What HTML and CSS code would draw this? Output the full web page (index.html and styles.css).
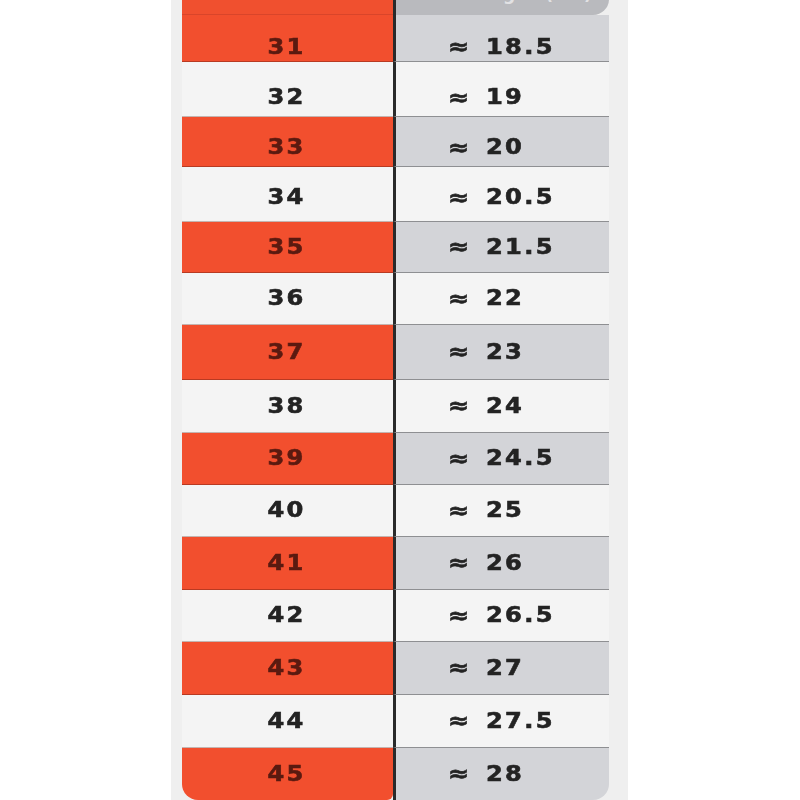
FILE: index.html
```html
<!DOCTYPE html>
<html>
<head>
<meta charset="utf-8">
<link rel="stylesheet" href="styles.css">
</head>
<body>
<div class="page">
  <div class="panel">
    <div class="chart">
      <div class="cell head-eu">Euro Size</div>
      <div class="cell head-cm">Foot Length (cm)</div>

      <div class="cell eu red s1"><span class="n">31</span></div><div class="cell cm grey s1"><span class="val"><span class="ap">≈</span><span class="num">18.5</span></span></div>
      <div class="cell eu white s2"><span class="n">32</span></div><div class="cell cm white s2"><span class="val"><span class="ap">≈</span><span class="num">19</span></span></div>
      <div class="cell eu red s3"><span class="n">33</span></div><div class="cell cm grey s3"><span class="val"><span class="ap">≈</span><span class="num">20</span></span></div>
      <div class="cell eu white s4"><span class="n">34</span></div><div class="cell cm white s4"><span class="val"><span class="ap">≈</span><span class="num">20.5</span></span></div>
      <div class="cell eu red"><span class="n">35</span></div><div class="cell cm grey"><span class="val"><span class="ap">≈</span><span class="num">21.5</span></span></div>
      <div class="cell eu white"><span class="n">36</span></div><div class="cell cm white"><span class="val"><span class="ap">≈</span><span class="num">22</span></span></div>
      <div class="cell eu red"><span class="n">37</span></div><div class="cell cm grey"><span class="val"><span class="ap">≈</span><span class="num">23</span></span></div>
      <div class="cell eu white"><span class="n">38</span></div><div class="cell cm white"><span class="val"><span class="ap">≈</span><span class="num">24</span></span></div>
      <div class="cell eu red"><span class="n">39</span></div><div class="cell cm grey"><span class="val"><span class="ap">≈</span><span class="num">24.5</span></span></div>
      <div class="cell eu white"><span class="n">40</span></div><div class="cell cm white"><span class="val"><span class="ap">≈</span><span class="num">25</span></span></div>
      <div class="cell eu red"><span class="n">41</span></div><div class="cell cm grey"><span class="val"><span class="ap">≈</span><span class="num">26</span></span></div>
      <div class="cell eu white"><span class="n">42</span></div><div class="cell cm white"><span class="val"><span class="ap">≈</span><span class="num">26.5</span></span></div>
      <div class="cell eu red"><span class="n">43</span></div><div class="cell cm grey"><span class="val"><span class="ap">≈</span><span class="num">27</span></span></div>
      <div class="cell eu white"><span class="n">44</span></div><div class="cell cm white"><span class="val"><span class="ap">≈</span><span class="num">27.5</span></span></div>
      <div class="cell eu red last-eu"><span class="n">45</span></div><div class="cell cm grey last-cm"><span class="val"><span class="ap">≈</span><span class="num">28</span></span></div>
    </div>
  </div>
</div>
</body>
</html>
```

FILE: styles.css
```css
html, body {
  margin: 0;
  padding: 0;
  background: #ffffff;
  overflow: hidden;
}

.page {
  width: 800px;
  height: 800px;
  overflow: hidden;
  display: flex;
}

.panel {
  margin-left: 171px;
  width: 457px;
  background: #efefef;
  padding: 0 16px 0 11px;
  box-sizing: border-box;
  margin-top: -28px;
  height: 828px;
}

.chart {
  display: grid;
  grid-template-columns: 211px 216px;
  grid-template-rows: 43px 47px 55px 50px 55px 51px 52px 55px 53px 52px 52px 53px 52px 53px 53px 52px;
  font-family: "DejaVu Sans", "Liberation Sans", sans-serif;
  font-weight: bold;
  font-size: 21px;
  line-height: 1;
}

.cell {
  display: flex;
  align-items: center;
  box-sizing: border-box;
}

.head-eu {
  background: #f0502f;
  color: #f6a48e;
  justify-content: center;
  align-items: flex-start;
  font-size: 17px;
  letter-spacing: 1px;
  padding-top: 14px;
  border-bottom: 1px solid #d9452a;
  filter: blur(0.7px);
}

.head-cm {
  background: #b9babe;
  color: #e2e2e4;
  border-left: 3px solid #2a2a2a;
  border-bottom-right-radius: 16px;
  justify-content: center;
  align-items: flex-start;
  font-size: 17px;
  letter-spacing: 1px;
  padding-top: 14px;
}

.eu {
  justify-content: center;
  padding-right: 2px;
}

.n {
  display: inline-block;
  letter-spacing: 2px;
  transform: scaleX(1.15);
  -webkit-text-stroke: 0.6px currentColor;
}

.cm {
  border-left: 3px solid #2a2a2a;
  padding-left: 52px;
  color: #232323;
}

.val {
  display: inline-flex;
  align-items: center;
  transform: scaleX(1.15);
  transform-origin: left center;
  -webkit-text-stroke: 0.6px currentColor;
}

.ap {
  width: 33px;
  font-size: 22px;
}

.num {
  letter-spacing: 2px;
}

.s1 { padding-top: 18px; }
.s2 { padding-top: 17px; }
.s3 { padding-top: 12px; }
.s4 { padding-top: 7px; }

.red {
  background: #f24f2e;
  color: #5a1a10;
  border-bottom: 1px solid #b83a22;
}

.white {
  background: #f4f4f4;
  color: #232323;
  border-bottom: 1px solid #c4b4b0;
}

.grey {
  background: #d3d4d8;
  border-bottom: 1px solid #8e8f92;
}

.cm.white {
  border-bottom: 1px solid #8e8f92;
}

.last-eu {
  border-bottom: none;
  border-bottom-left-radius: 16px;
  border-bottom-right-radius: 6px;
}

.last-cm {
  border-bottom: none;
  border-bottom-right-radius: 16px;
}
```
